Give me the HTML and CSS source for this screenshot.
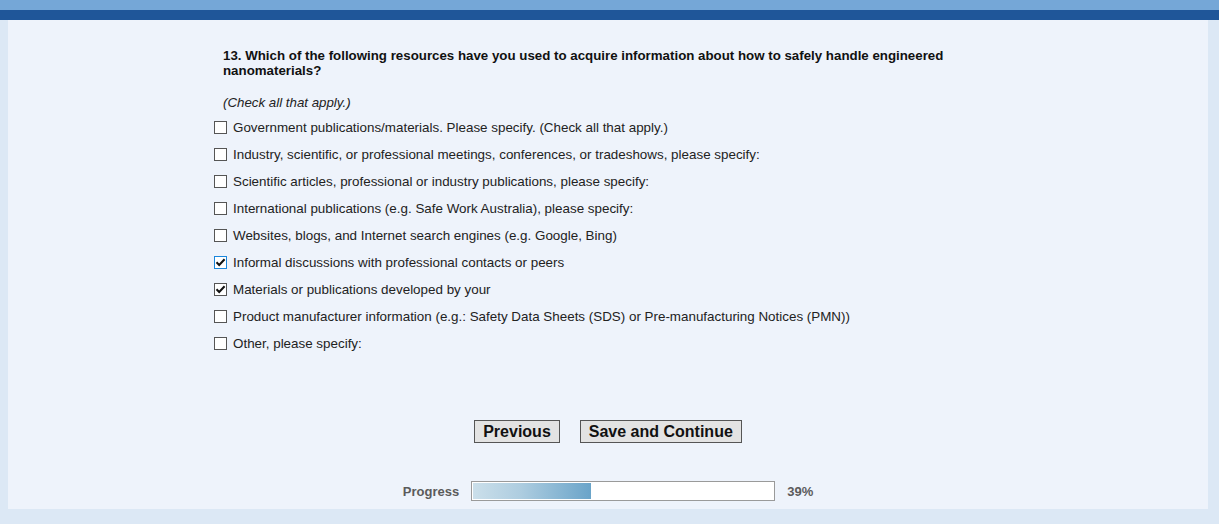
FILE: index.html
```html
<!DOCTYPE html>
<html lang="en">
<head>
    <meta charset="UTF-8">
    <title>Survey - Question 13</title>
    <link rel="stylesheet" href="styles.css">
</head>
<body>
    <div class="topbar"></div>
    <div class="page">
        <form class="survey">
            <div class="question">13. Which of the following resources have you used to acquire information about how to safely handle engineered nanomaterials?</div>
            <div class="hint">(Check all that apply.)</div>
            <ul class="options">
                <li><label><span class="box"></span>Government publications/materials. Please specify. (Check all that apply.)</label></li>
                <li><label><span class="box"></span>Industry, scientific, or professional meetings, conferences, or tradeshows, please specify:</label></li>
                <li><label><span class="box"></span>Scientific articles, professional or industry publications, please specify:</label></li>
                <li><label><span class="box"></span>International publications (e.g. Safe Work Australia), please specify:</label></li>
                <li><label><span class="box"></span>Websites, blogs, and Internet search engines (e.g. Google, Bing)</label></li>
                <li><label><span class="box checked focus"><svg viewBox="0 0 11 11" width="11" height="11"><path d="M1.5 5.2 L4.2 8 L9.6 2.2" fill="none" stroke="#111" stroke-width="2"/></svg></span>Informal discussions with professional contacts or peers</label></li>
                <li><label><span class="box checked"><svg viewBox="0 0 11 11" width="11" height="11"><path d="M1.5 5.2 L4.2 8 L9.6 2.2" fill="none" stroke="#111" stroke-width="2"/></svg></span>Materials or publications developed by your</label></li>
                <li><label><span class="box"></span>Product manufacturer information (e.g.: Safety Data Sheets (SDS) or Pre-manufacturing Notices (PMN))</label></li>
                <li><label><span class="box"></span>Other, please specify:</label></li>
            </ul>
            <div class="buttons">
                <button type="button">Previous</button>
                <button type="button">Save and Continue</button>
            </div>
            <div class="progress">
                <span class="progress-label">Progress</span>
                <div class="bar"><div class="fill" style="width: 39%"></div></div>
                <span class="progress-value">39%</span>
            </div>
        </form>
    </div>
</body>
</html>
```

FILE: styles.css
```css
body {
    margin: 0;
    background-color: #dce8f5;
    font-family: "Liberation Sans", Arial, sans-serif;
    color: #222;
}
.topbar {
    height: 10px;
    background-color: #75a7d7;
    border-bottom: 10px solid #1f5699;
}
.page {
    margin: 0 11px 16px 8px;
    background-color: #eef3fb;
    padding: 28px 0 8px;
}
.survey {
    width: 790px;
    margin: 0 auto;
}
.question {
    padding-left: 10px;
    font-size: 13.3px;
    font-weight: bold;
    line-height: 15px;
    color: #111;
}
.hint {
    padding-left: 10px;
    margin-top: 17px;
    font-size: 13.3px;
    font-style: italic;
    line-height: 15px;
}
.options {
    list-style: none;
    margin: 4px 0 0;
    padding: 0;
}
.options li {
    height: 27px;
    display: flex;
    align-items: center;
}
.options label {
    display: flex;
    align-items: center;
    font-size: 13.4px;
    color: #222;
}
.box {
    width: 11px;
    height: 11px;
    border: 1px solid #555;
    background-color: white;
    margin: 0 6px 0 1px;
    display: flex;
    align-items: center;
    justify-content: center;
}
.box.focus {
    border-color: #1a86dc;
}
.buttons {
    display: flex;
    justify-content: center;
    gap: 20px;
    margin-top: 63px;
}
button {
    font-family: "Liberation Sans", Arial, sans-serif;
    font-size: 16px;
    font-weight: bold;
    color: #111;
    background-color: #e3e3e3;
    border: 1px solid #555;
    padding: 1px 8px;
    height: 23px;
    line-height: 19px;
}
.progress {
    display: flex;
    align-items: center;
    justify-content: center;
    margin-top: 38px;
}
.progress-label {
    font-size: 13px;
    font-weight: bold;
    color: #5b5b5b;
    margin-right: 12px;
}
.bar {
    width: 302px;
    height: 16px;
    border: 1px solid #9a9a9a;
    background-color: white;
    padding: 1px 0;
}
.fill {
    height: 16px;
    margin-left: 1px;
    background: linear-gradient(to right, #cbdfea, #aecde0 40%, #6aa4c9);
}
.progress-value {
    font-size: 13px;
    font-weight: bold;
    color: #5b5b5b;
    margin-left: 12px;
}
```
